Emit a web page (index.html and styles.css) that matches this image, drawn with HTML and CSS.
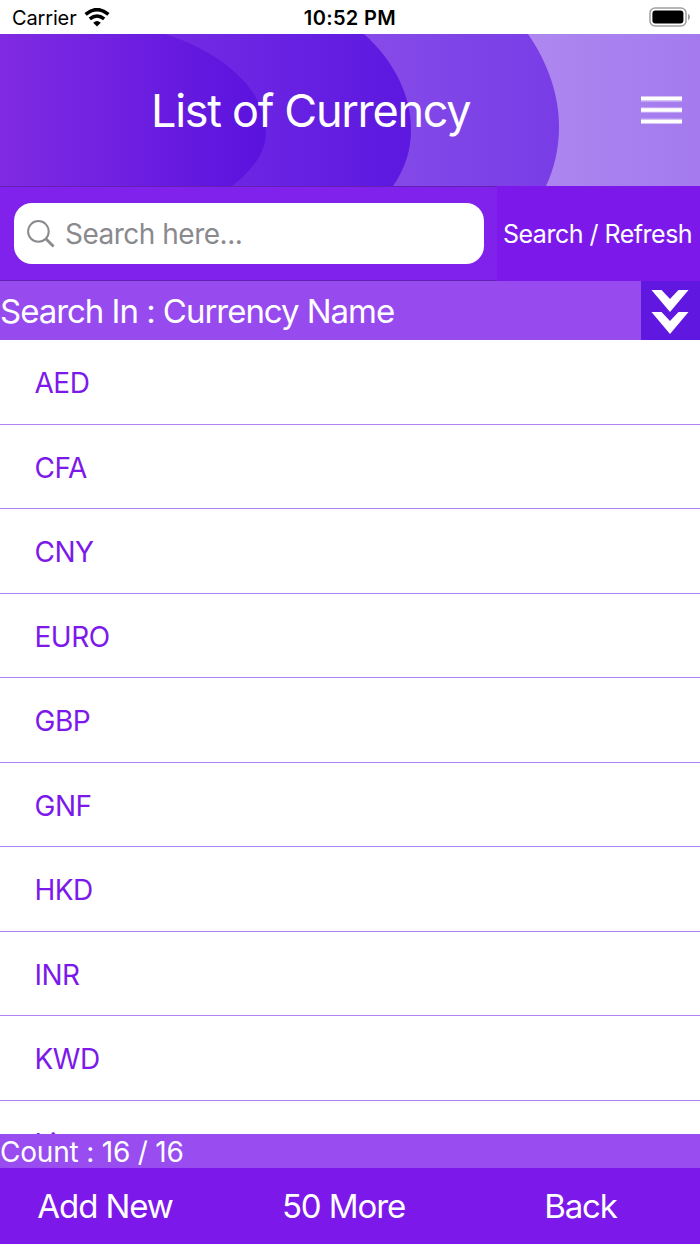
FILE: index.html
```html
<!DOCTYPE html>
<html lang="en">
<head>
    <meta charset="UTF-8">
    <meta name="viewport" content="width=device-width, initial-scale=1.0">
    <title>List of Currency</title>
    <link rel="stylesheet" href="styles.css">
</head>
<body>
    <div class="screen">
        <div class="status-bar">
            <div class="carrier">
                <span>Carrier</span>
                <svg class="wifi" width="26" height="19" viewBox="0 0 26 19">
                    <path d="M1.6 6.4Q13 -3.2 24.4 6.4" fill="none" stroke="#000" stroke-width="3.5"/>
                    <path d="M5.8 10.9Q13 4.9 20.2 10.9" fill="none" stroke="#000" stroke-width="3.4"/>
                    <path d="M9.2 14.7Q13 11.2 16.8 14.7L13 18.4Z" fill="#000"/>
                </svg>
            </div>
            <span class="time">10:52 PM</span>
            <svg class="battery" width="42" height="20" viewBox="0 0 42 20">
                <rect x="1" y="1" width="36" height="18" rx="5" fill="none" stroke="#a0a0a0" stroke-width="1.5"/>
                <rect x="3.4" y="3.6" width="31" height="12.8" rx="3" fill="#000"/>
                <path d="M39 6.8Q41 7.6 41 10T39 13.2Z" fill="#a0a0a0"/>
            </svg>
        </div>

        <header class="header">
            <svg class="header-bg" viewBox="0 0 700 152" preserveAspectRatio="none">
                <defs>
                    <linearGradient id="g1" gradientUnits="userSpaceOnUse" x1="0" y1="0" x2="266" y2="0">
                        <stop offset="0" stop-color="#802be2"/>
                        <stop offset="1" stop-color="#5a12de"/>
                    </linearGradient>
                    <linearGradient id="g2" gradientUnits="userSpaceOnUse" x1="165" y1="0" x2="411" y2="0">
                        <stop offset="0" stop-color="#742be4"/>
                        <stop offset="1" stop-color="#5c18e0"/>
                    </linearGradient>
                    <linearGradient id="g3" gradientUnits="userSpaceOnUse" x1="364" y1="0" x2="559" y2="0">
                        <stop offset="0" stop-color="#864be8"/>
                        <stop offset="1" stop-color="#783de6"/>
                    </linearGradient>
                    <linearGradient id="g4" gradientUnits="userSpaceOnUse" x1="528" y1="0" x2="700" y2="0">
                        <stop offset="0" stop-color="#ae87f0"/>
                        <stop offset="1" stop-color="#a47aee"/>
                    </linearGradient>
                </defs>
                <rect width="700" height="152" fill="url(#g4)"/>
                <path d="M0 0H528C548 29 559 61 559 93C559 115 554 135 546 152H0Z" fill="url(#g3)"/>
                <path d="M0 0H364C395 28 411 62 411 96C411 118 404 136 393 152H0Z" fill="url(#g2)"/>
                <path d="M0 0H165C228 20 266 60 266 98C266 118 253 136 232 152H0Z" fill="url(#g1)"/>
            </svg>
            <h1 class="title">List of Currency</h1>
            <svg class="menu" width="41" height="28" viewBox="0 0 41 28">
                <path d="M0 2.9H41M0 14H41M0 25.2H41" stroke="#fff" stroke-opacity="0.4" stroke-width="5.6"/>
                <path d="M0 2.5H41M0 14H41M0 25.5H41" stroke="#fff" stroke-width="3.6"/>
            </svg>
        </header>

        <div class="search-row">
            <div class="search-wrap">
                <div class="search-box">
                    <svg class="search-icon" width="28" height="28" viewBox="0 0 28 28">
                        <circle cx="11.4" cy="11.4" r="10.3" fill="none" stroke="#8a8a8e" stroke-width="2"/>
                        <path d="M18.8 18.8L26.6 26.6" stroke="#8a8a8e" stroke-width="2.8"/>
                    </svg>
                    <span class="placeholder">Search here...</span>
                </div>
            </div>
            <div class="search-btn"><span>Search / Refresh</span></div>
        </div>

        <div class="filter-row">
            <div class="filter-label"><span>Search In : Currency Name</span></div>
            <div class="filter-toggle">
                <svg width="38" height="46" viewBox="0 0 38 46">
                    <path d="M0.5 1H10.5L19 10L27.5 1H37.5L19 23Z" fill="#fff"/>
                    <path d="M0.5 23H10.5L19 32L27.5 23H37.5L19 45Z" fill="#fff"/>
                </svg>
            </div>
        </div>

        <ul class="list">
            <li>AED</li>
            <li>CFA</li>
            <li>CNY</li>
            <li>EURO</li>
            <li>GBP</li>
            <li>GNF</li>
            <li>HKD</li>
            <li>INR</li>
            <li>KWD</li>
            <li>Lira</li>
        </ul>

        <div class="count"><span>Count : 16 / 16</span></div>

        <footer class="footer">
            <span class="add">Add New</span>
            <span class="more">50 More</span>
            <span class="back">Back</span>
        </footer>
    </div>
</body>
</html>
```
FILE: styles.css
```css
* {
    box-sizing: border-box;
}

body {
    margin: 0;
    font-family: Inter, "Liberation Sans", sans-serif;
    background-color: #fff;
    color: #fff;
}

.screen {
    display: flex;
    flex-direction: column;
    width: 700px;
    height: 1244px;
    overflow: hidden;
    white-space: nowrap;
}

/* Status bar */
.status-bar {
    display: grid;
    grid-template-columns: 1fr auto 1fr;
    align-items: center;
    height: 34px;
    flex: none;
    padding: 2px 9px 0 12px;
    color: #000;
    font-size: 20px;
}

.carrier {
    display: flex;
    align-items: center;
    gap: 7px;
    letter-spacing: -0.15px;
}

.wifi {
    margin-top: -2px;
}

.time {
    font-weight: 600;
    letter-spacing: 0.35px;
    margin-right: 3px;
}

.battery {
    justify-self: end;
    margin-top: -2px;
}

/* Header */
.header {
    position: relative;
    display: flex;
    align-items: center;
    height: 152px;
    flex: none;
    padding: 0 18px 0 151px;
}

.header-bg {
    position: absolute;
    top: 0;
    left: 0;
    width: 100%;
    height: 100%;
}

.title {
    position: relative;
    margin: 0;
    font-size: 45px;
    font-weight: 400;
    letter-spacing: -1.3px;
}

.menu {
    position: relative;
    margin-left: auto;
}

/* Search */
.search-row {
    display: flex;
    height: 95px;
    flex: none;
    background-color: #7c19ea;
}

.search-wrap {
    width: 497px;
    flex: none;
    padding: 16px 13px 15px 14px;
    background-color: #8022ec;
    border-top: 1px solid #641fb4;
    border-bottom: 1px solid #641fb4;
}

.search-box {
    display: flex;
    align-items: center;
    height: 61px;
    padding-left: 13px;
    gap: 10px;
    background-color: #fff;
    border-radius: 18px;
    color: #8a8a8e;
    font-size: 28px;
    letter-spacing: -0.5px;
}

.search-btn {
    display: flex;
    align-items: center;
    padding-left: 6px;
    font-size: 25px;
    letter-spacing: -0.5px;
}

/* Filter */
.filter-row {
    display: flex;
    height: 59px;
    flex: none;
    background-color: #974bef;
}

.filter-label {
    display: flex;
    align-items: center;
    flex: 1;
    font-size: 33px;
    letter-spacing: -1.03px;
}

.filter-toggle {
    display: flex;
    align-items: center;
    justify-content: center;
    width: 59px;
    padding: 3px 1px 0 0;
    background-color: #6018e0;
}

/* List */
.list {
    flex: 1;
    min-height: 0;
    margin: 0;
    padding: 0;
    overflow: hidden;
    list-style: none;
    color: #7c19ea;
    font-size: 28px;
    letter-spacing: -0.5px;
}

.list li {
    height: 84.5px;
    padding-left: 34.5px;
    line-height: 87px;
    border-bottom: 1px solid #b483f3;
}

/* Bottom */
.count {
    display: flex;
    align-items: center;
    height: 34px;
    flex: none;
    padding-top: 2px;
    background-color: #994df0;
    font-size: 28px;
    letter-spacing: -0.2px;
}

.footer {
    display: grid;
    grid-template-columns: 210px 267px 207px;
    align-items: center;
    height: 76px;
    flex: none;
    background-color: #7c19ea;
    font-size: 33px;
    letter-spacing: -1.1px;
}

.footer span {
    text-align: center;
}
```
